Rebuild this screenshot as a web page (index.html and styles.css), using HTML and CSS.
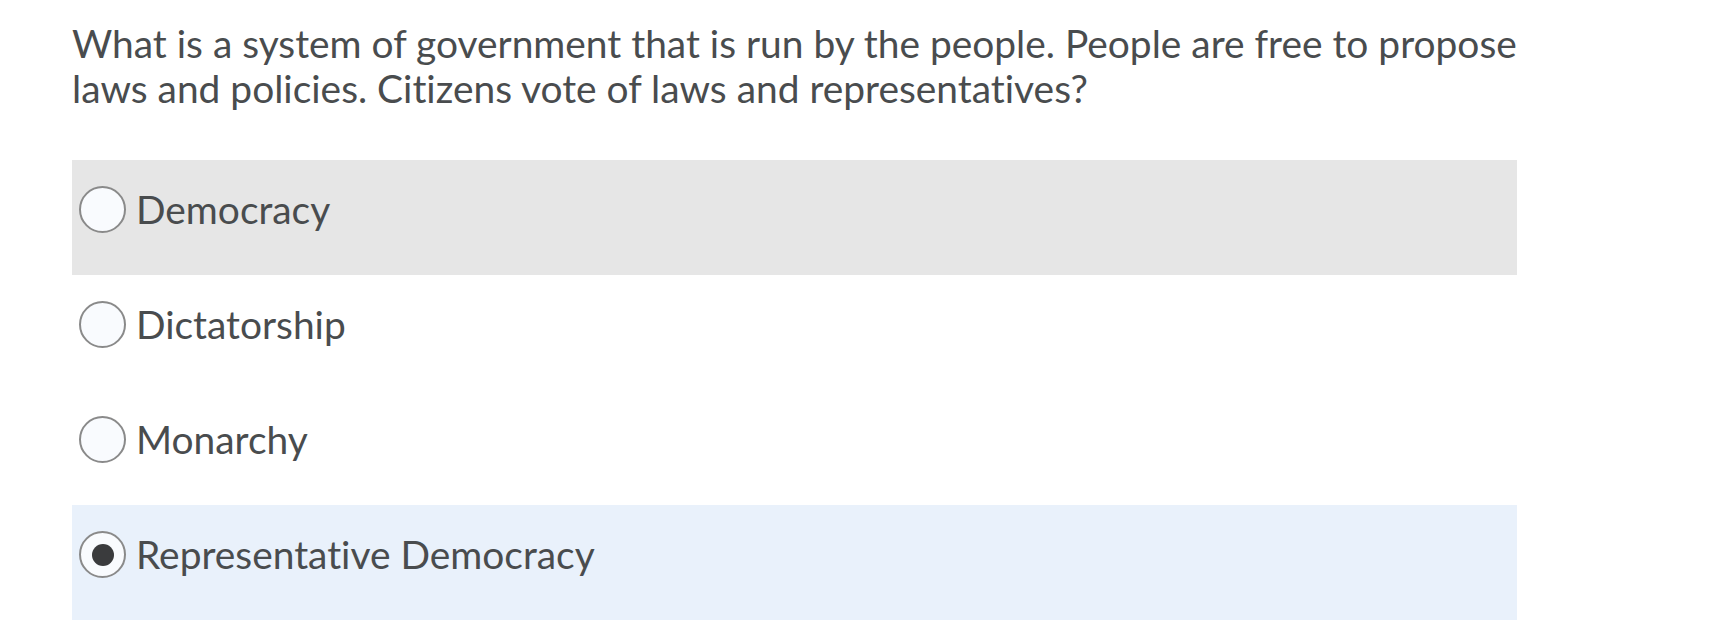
FILE: index.html
```html
<!DOCTYPE html>
<html lang="en">
<head>
    <meta charset="UTF-8">
    <meta name="viewport" content="width=device-width, initial-scale=1.0">
    <title>Quiz - Question</title>
    <link rel="stylesheet" href="styles.css">
</head>
<body>
    <div class="question">
        <p class="question-text">What is a system of government that is run by the people. People are free to propose laws and policies. Citizens vote of laws and representatives?</p>

        <div class="choices">
            <label class="choice hovered">
                <input type="radio" name="q1" value="1">
                <span class="radio"></span>
                <span class="choice-label">Democracy</span>
            </label>
            <label class="choice">
                <input type="radio" name="q1" value="2">
                <span class="radio"></span>
                <span class="choice-label">Dictatorship</span>
            </label>
            <label class="choice">
                <input type="radio" name="q1" value="3">
                <span class="radio"></span>
                <span class="choice-label">Monarchy</span>
            </label>
            <label class="choice selected">
                <input type="radio" name="q1" value="4" checked>
                <span class="radio"></span>
                <span class="choice-label">Representative Democracy</span>
            </label>
        </div>
    </div>
</body>
</html>
```

FILE: styles.css
```css
body {
    margin: 0;
    padding: 0 72px;
    background-color: #fff;
    font-family: Lato, "Open Sans", sans-serif;
    font-variant-ligatures: none;
    color: #494c4e;
}

.question {
    width: 1445px;
}

.question-text {
    width: 1490px;
    margin: 21px 0 49px 0;
    font-size: 38.9px;
    line-height: 45px;
}

/* Lista de alternativas */
.choices {
    display: flex;
    flex-direction: column;
}

.choice {
    display: flex;
    align-items: flex-start;
    gap: 10px;
    height: 115px;
    box-sizing: border-box;
    padding: 26px 6px 0 7px;
    cursor: pointer;
}
.choice.hovered {
    background-color: #e6e6e6;
}
.choice.selected {
    background-color: #e9f1fb;
}

.choice input {
    display: none; /* usamos o círculo desenhado abaixo */
}

.radio {
    flex: none;
    width: 47px;
    height: 47px;
    box-sizing: border-box;
    border: 2px solid #8a8a8a;
    border-radius: 50%;
    background-color: #f9fbfe;
    display: flex;
    align-items: center;
    justify-content: center;
}
.choice input:checked + .radio::after {
    content: "";
    width: 22px;
    height: 22px;
    border-radius: 50%;
    background-color: #3a3b3d;
}

.choice-label {
    margin-top: 1px;
    font-size: 38.9px;
    line-height: 45px;
}
```
